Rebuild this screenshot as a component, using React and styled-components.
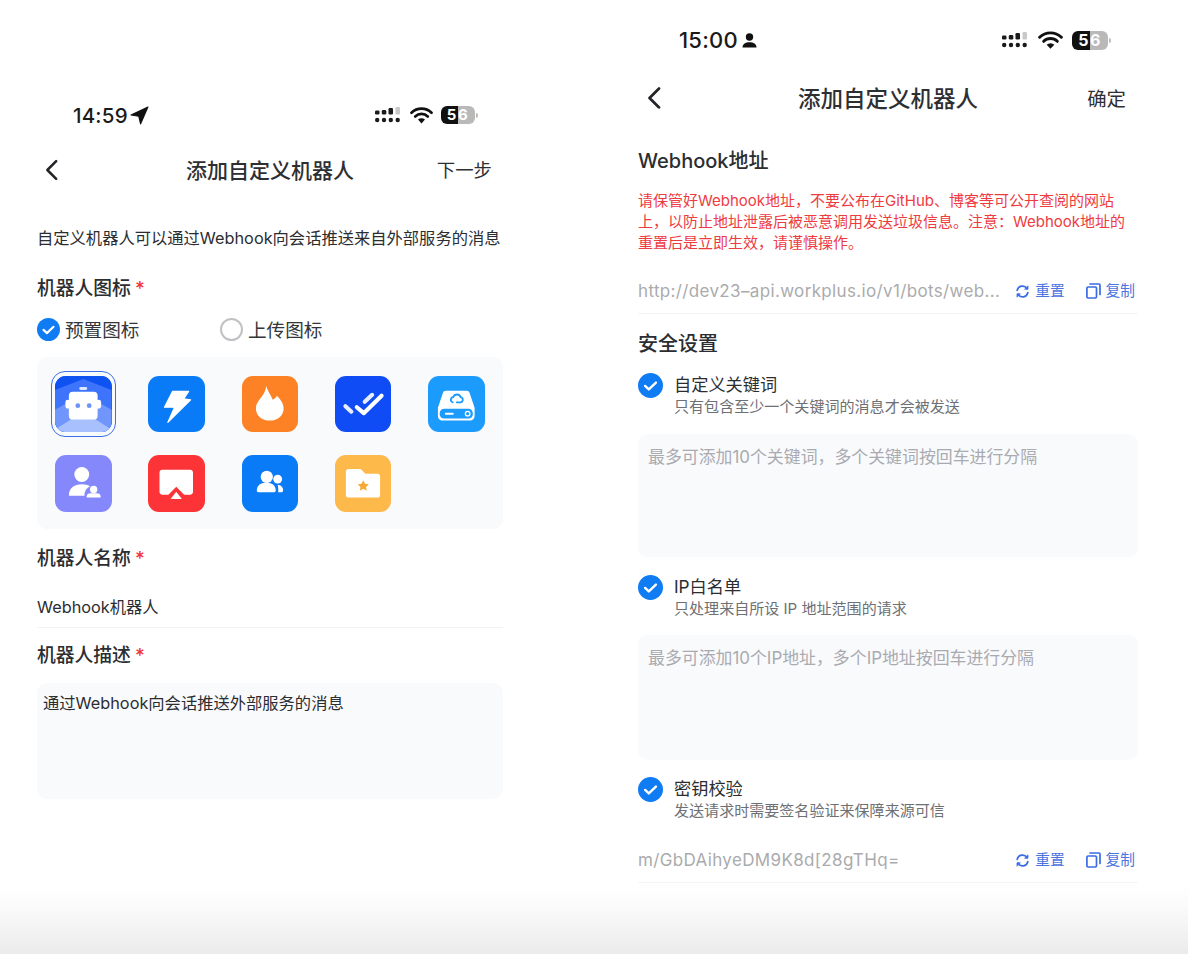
import React from "react";
import styled, { createGlobalStyle } from "styled-components";

const Global = createGlobalStyle`
  html, body { margin: 0; padding: 0; background: #fff; }
  * { box-sizing: border-box; }
  body { font-family: Inter, "Noto Sans CJK SC", sans-serif; color: #2b2d31; }
`;
const Page = styled.div`
  width: 1188px; height: 954px; overflow: hidden; display: flex; align-items: flex-start;
  background: linear-gradient(180deg, #fff 0, #fff 885px, #fbfbfb 905px, #ebebeb 954px);
`;
const Phone = styled.div`
  flex: none; width: ${p => p.$width}px; margin-left: ${p => p.$left}px; padding-top: ${p => p.$top}px;
`;
const StatusBar = styled.div`
  height: 30px; display: flex; align-items: center; justify-content: space-between;
  padding: 0 ${p => p.$right}px 0 ${p => p.$pad}px;
`;
const Clock = styled.div`
  display: flex; align-items: center; gap: ${p => p.$gap}px; font-size: ${p => p.$size}px; font-weight: 500; color: #1a1a1a; letter-spacing: .2px;
`;
const StatusIcons = styled.div`display: flex; align-items: center; gap: ${p => p.$gap}px;`;
const Battery = styled.div`
  position: relative; width: ${p => p.$w}px; height: ${p => p.$h}px; border-radius: 6px;
  background: linear-gradient(90deg, #111 0, #111 49%, #b9b9b9 49%, #b9b9b9 100%);
  color: #fff; font-size: ${p => p.$h - 3}px; font-weight: 700; line-height: ${p => p.$h}px; text-align: center; letter-spacing: 1.5px;
  &::after {
    content: ""; position: absolute; right: -3px; top: 50%; width: 2px; height: 5px; margin-top: -2.5px; border-radius: 0 2px 2px 0; background: #bdbdbd;
  }
`;
const Nav = styled.div`
  position: relative; margin-top: ${p => p.$mt}px; height: ${p => p.$h}px; display: flex; align-items: center; justify-content: center;
`;
const Back = styled.svg`position: absolute; left: ${p => p.$left}px; top: 50%; transform: translateY(-50%);`;
const NavTitle = styled.div`font-size: ${p => p.$size}px; font-weight: 500; color: #2e2f33; padding-bottom: 2px;`;
const NavAction = styled.div`position: absolute; right: ${p => p.$right}px; top: 50%; transform: translateY(-50%); padding-bottom: 2px; font-size: ${p => p.$size}px; color: #2e2f33;`;
const Desc = styled.div`margin-top: 36px; font-size: 16.3px; line-height: 24px; height: 24px; white-space: nowrap; color: #2b2d31;`;
const Label = styled.div`margin-top: ${p => p.$mt}px; height: 26px; line-height: 26px; font-size: 18.8px; font-weight: 500; color: #2b2d31; em { font-style: normal; color: #f0353b; margin-left: 4px; }`;
const RadioRow = styled.div`margin-top: 14px; height: 26px; display: flex; align-items: center;`;
const RadioOption = styled.div`display: flex; align-items: center; gap: 5px; width: ${p => p.$w}px; font-size: 18.6px; color: #34363a;`;
const RadioText = styled.span`margin-top: -2px;`;
const EmptyRadio = styled.span`width: 23px; height: 23px; border-radius: 50%; border: 2px solid #bfc1c4; background: #fff; flex: none;`;
const Panel = styled.div`
  margin-top: 15px; height: 172px; background: #f8fafc; border-radius: 10px; padding: 18.7px 18.3px;
  display: grid; grid-template-columns: repeat(5, 56.5px); grid-auto-rows: 56.5px; column-gap: 36.7px; row-gap: 23.1px;
`;
const Tile = styled.div`
  position: relative; width: 56.5px; height: 56.5px; border-radius: 11px; background: ${p => p.$bg}; overflow: ${p => p.$clip ? "hidden" : "visible"};
  svg { display: block; width: 100%; height: 100%; }
`;
const Ring = styled.div`
  position: relative; width: 56.5px; height: 56.5px;
  &::after { content: ""; position: absolute; inset: -4.7px; border: 1.5px solid #3e6fe6; border-radius: 14px; }
`;
const NameField = styled.div`margin-top: 12px; height: 44px; padding-top: 11px; line-height: 24px; font-size: 16.3px; color: #2b2d31; border-bottom: 1px solid #f1f2f4;`;
const TextBox = styled.div`
  margin-top: ${p => p.$mt}px; height: ${p => p.$h}px; background: #f9fafc; border-radius: 10px;
  padding: ${p => p.$py}px ${p => p.$px}px; font-size: ${p => p.$size}px; line-height: ${p => p.$lh}px; color: ${p => p.$color};
`;
const SectionTitle = styled.div`margin-top: ${p => p.$mt}px; height: 28px; line-height: 28px; font-size: 20px; font-weight: 500; color: #2b2d31;`;
const Warning = styled.div`margin-top: 15px; font-size: 15px; line-height: 21px; color: #ee3b3f; white-space: nowrap;`;
const UrlRow = styled.div`
  margin-top: ${p => p.$mt}px; height: 45px; padding: 0 3px 0 0; border-bottom: 1px solid #f3f4f5; display: flex; align-items: center; justify-content: space-between;
`;
const UrlText = styled.div`font-size: 17px; color: #aaabad; white-space: nowrap; letter-spacing: .35px;`;
const Actions = styled.div`display: flex; align-items: center; gap: 21px;`;
const ActionLink = styled.div`display: flex; align-items: center; gap: 5px; font-size: 14.7px; color: #4a74e0; line-height: 20px;`;
const CheckItem = styled.div`margin-top: ${p => p.$mt}px; display: flex; gap: 11px; align-items: flex-start;`;
const CheckTexts = styled.div`display: flex; flex-direction: column;`;
const CheckTitle = styled.div`font-size: 17.2px; line-height: 24px; color: #2b2d31;`;
const CheckSub = styled.div`font-size: 15.05px; line-height: 20px; color: #6e7074; white-space: nowrap;`;
const CheckDisc = styled.svg`flex: none; display: block;`;

const Checked = ({ size }) => (
  <CheckDisc width={size} height={size} viewBox="0 0 24 24">
    <circle cx="12" cy="12" r="12" fill="#0f7cf4" />
    <path d="M6.8 12.4l3.6 3.4 6.8-6.6" fill="none" stroke="#fff" strokeWidth="2.3" strokeLinecap="round" strokeLinejoin="round" />
  </CheckDisc>
);
const Chevron = ({ left, size }) => (
  <Back $left={left} width={size} height={size * 1.6} viewBox="0 0 12 20">
    <path d="M10.5 1.5L2 10l8.5 8.5" fill="none" stroke="#232427" strokeWidth="2.4" strokeLinecap="round" strokeLinejoin="round" />
  </Back>
);
const Signal = () => (
  <svg width="27" height="16" viewBox="0 0 27 16">
    <rect x="0" y="3.5" width="4.5" height="4" rx="1.3" fill="#1a1a1a" />
    <rect x="6.8" y="3" width="4.5" height="4.5" rx="1.3" fill="#1a1a1a" />
    <rect x="13.5" y="1" width="4.5" height="6.5" rx="1.3" fill="#1a1a1a" />
    <rect x="20.5" y="0" width="4.5" height="7.5" rx="1.3" fill="#c9c9c9" />
    {[2.2, 9, 15.8, 22.7].map(x => <circle key={x} cx={x} cy="13" r="2.2" fill="#1a1a1a" />)}
  </svg>
);
const Wifi = ({ w = 23 }) => (
  <svg width={w} height={w * 17 / 23} viewBox="0 0 23 17">
    <path d="M1.5 5.8a14.3 14.3 0 0 1 20 0" fill="none" stroke="#111" strokeWidth="2.7" strokeLinecap="round" />
    <path d="M5.2 9.5a9 9 0 0 1 12.6 0" fill="none" stroke="#111" strokeWidth="2.7" strokeLinecap="round" />
    <path d="M8 12.6a5 5 0 0 1 7 0l-3.5 3.8z" fill="#111" />
  </svg>
);
const RefreshIcon = () => (
  <svg width="15" height="15" viewBox="0 0 15 15" fill="none" stroke="#3a6ce6" strokeWidth="1.7" strokeLinecap="round">
    <path d="M2.2 6.3A5.4 5.4 0 0 1 12 4.6" />
    <path d="M12.8 8.7A5.4 5.4 0 0 1 3 10.4" />
    <path d="M13 2.2v3h-3z" fill="#3a6ce6" strokeWidth=".8" strokeLinejoin="round" />
    <path d="M2 12.8v-3h3z" fill="#3a6ce6" strokeWidth=".8" strokeLinejoin="round" />
  </svg>
);
const CopyIcon = () => (
  <svg width="15" height="16" viewBox="0 0 15 16" fill="none" stroke="#3a6ce6" strokeWidth="1.7" strokeLinejoin="round">
    <rect x=".9" y="4" width="9.6" height="11" rx="1.2" />
    <path d="M4 1h9a1 1 0 0 1 1 1v9.5" strokeLinecap="round" />
  </svg>
);
const UrlLine = ({ text, mt }) => (
  <UrlRow $mt={mt}>
    <UrlText>{text}</UrlText>
    <Actions>
      <ActionLink><RefreshIcon />重置</ActionLink>
      <ActionLink><CopyIcon />复制</ActionLink>
    </Actions>
  </UrlRow>
);

const RobotIcon = () => (
  <svg viewBox="0 0 57 57">
    <rect width="57" height="57" fill="#0f52f2" />
    <path d="M0 14L28.500 3 57 14v43H0z" fill="#3d74fb" />
    <path d="M0 34l28.500-16L57 34v23H0z" fill="#7196fb" />
    <path d="M0 54l28.500-18L57 54v3H0z" fill="#a8c0fe" />
    <rect x="24.500" y="11" width="8" height="3" rx="1.500" fill="#dfe8ff" />
    <rect x="14" y="16" width="29" height="28" rx="4" fill="#fff" />
    <rect x="10.500" y="24" width="5" height="9" rx="2.500" fill="#fff" />
    <rect x="41.500" y="24" width="5" height="9" rx="2.500" fill="#fff" />
    <circle cx="23" cy="30" r="2.400" fill="#6e93f8" />
    <circle cx="34.500" cy="30" r="2.400" fill="#6e93f8" />
  </svg>
);
const BoltIcon = () => (
  <svg viewBox="0 0 57 57">
    <path d="M24.700 15.600H41L36 23l7 1-23 22.800 6.800-15.300H16.600z" fill="#fff" stroke="#fff" strokeWidth="1.200" strokeLinejoin="round" />
  </svg>
);
const FlameIcon = () => (
  <svg viewBox="0 0 57 57">
    <path d="M24.300 10C26 15 29 19 31 24c1.800-1 3.300-2.400 4.300-4C39 24 42 28 42 32.500 42 40 36 45 28 45S14 40 14 32.500C14 24 24 20 24.300 10z" fill="#fff" />
  </svg>
);
const ChecksIcon = () => (
  <svg viewBox="0 0 57 57" fill="none" stroke="#fff" strokeWidth="4.200" strokeLinecap="round" strokeLinejoin="round">
    <path d="M10.500 30.500l6 5.500" opacity=".9" />
    <path d="M22 31.500l7 6 18-17.500" />
    <path d="M30 26l7.500-7" opacity=".9" />
  </svg>
);
const DriveIcon = () => (
  <svg viewBox="0 0 57 57">
    <path d="M18 15h21c1.500 0 2.500.8 3 2.200L47 32v8c0 2.700-2 5-4.700 5H14.700C12 45 10 42.700 10 40v-8l5-14.800c.5-1.400 1.500-2.200 3-2.200z" fill="#fff" />
    <rect x="11.800" y="33" width="33.400" height="10" rx="4.500" fill="#1b9bfc" />
    <rect x="17" y="37" width="9" height="2" rx="1" fill="#fff" />
    <circle cx="40" cy="38" r="2.300" fill="none" stroke="#fff" strokeWidth="1.300" />
    <path d="M25 26.500a2.600 2.600 0 0 1 .4-5.100 4 4 0 0 1 7.600 0 2.600 2.600 0 0 1 0 5.100h-4" fill="none" stroke="#1b9bfc" strokeWidth="1.800" strokeLinecap="round" />
  </svg>
);
const UserKeyIcon = () => (
  <svg viewBox="0 0 57 57">
    <circle cx="27" cy="19.700" r="7.500" fill="#fff" />
    <path d="M14 41c0-7.500 5-11.500 13-11.500 3.500 0 6.500.8 8.500 2-3 1.200-5 4-5.500 6.500l-.3 3z" fill="#fff" />
    <circle cx="39" cy="34.700" r="3.700" fill="#fff" />
    <path d="M32 43v-1.500c0-2 1.500-3 4-3h6c2.500 0 4 1 4 3V43z" fill="#fff" />
  </svg>
);
const ScreenIcon = () => (
  <svg viewBox="0 0 57 57">
    <path d="M14.500 15h28c1.700 0 2.900 1.200 2.900 2.900v19.200c0 1.700-1.200 2.900-2.900 2.900h-6L28.500 32 20.500 40h-6c-1.700 0-2.900-1.200-2.900-2.900V17.900c0-1.700 1.200-2.900 2.900-2.900z" fill="#fff" />
    <path d="M28.500 37l5.700 7.500H22.800z" fill="#fff" />
  </svg>
);
const GroupIcon = () => (
  <svg viewBox="0 0 57 57">
    <circle cx="25" cy="22" r="6.200" fill="#fff" />
    <path d="M15 35.500c0-5 4-7.500 9.500-7.500s9.500 2.500 9.500 7.500c0 1.300-.8 2.200-2 2.200H17c-1.200 0-2-.9-2-2.200z" fill="#fff" />
    <circle cx="36" cy="24.300" r="4.500" fill="#fff" />
    <path d="M36 30c3.500.3 5.500 2.300 5.500 5.500 0 1.300-.8 2.200-2 2.200H36.500c.3-2.500 0-5.500-.5-7.700z" fill="#fff" />
  </svg>
);
const FolderIcon = () => (
  <svg viewBox="0 0 57 57">
    <path d="M13.500 14h11c1 0 1.700.4 2.300 1l3.700 3.800h12.500c1.400 0 2.500 1.100 2.500 2.500v19.200c0 1.400-1.100 2.500-2.500 2.500H13.500c-1.400 0-2.500-1.100-2.500-2.500V16.500c0-1.400 1.100-2.500 2.500-2.500z" fill="#fff" />
    <path d="M28.500 25.500l1.700 3.500 3.900.5-2.800 2.700.7 3.800-3.500-1.900-3.500 1.900.7-3.800-2.800-2.700 3.900-.5z" fill="#f6a934" />
  </svg>
);

export default function App() {
  return (
    <Page>
      <Global />
      <Phone $width={466} $left={37} $top={100}>
        <StatusBar $pad={36} $right={28}>
          <Clock $size={20.500} $gap={2}>
            14:59
            <svg width="19" height="19" viewBox="0 0 18 18"><path d="M17 1L1 8.500l7.300 1.300L10 17z" fill="#111" stroke="#111" strokeWidth="1" strokeLinejoin="round" /></svg>
          </Clock>
          <StatusIcons $gap={8}>
            <Signal />
            <Wifi />
            <Battery $w={34} $h={18}>56</Battery>
          </StatusIcons>
        </StatusBar>
        <Nav $mt={20} $h={40}>
          <Chevron left={8} size={13} />
          <NavTitle $size={21}>添加自定义机器人</NavTitle>
          <NavAction $right={11} $size={18.400}>下一步</NavAction>
        </Nav>
        <Desc>自定义机器人可以通过Webhook向会话推送来自外部服务的消息</Desc>
        <Label $mt={26}>机器人图标<em>*</em></Label>
        <RadioRow>
          <RadioOption $w={183}><Checked size={23} /><RadioText>预置图标</RadioText></RadioOption>
          <RadioOption $w={140}><EmptyRadio /><RadioText>上传图标</RadioText></RadioOption>
        </RadioRow>
        <Panel>
          <Ring><Tile $bg="#0f52f2" $clip><RobotIcon /></Tile></Ring>
          <Tile $bg="#0a7bf7"><BoltIcon /></Tile>
          <Tile $bg="#fd8125"><FlameIcon /></Tile>
          <Tile $bg="#0f4cf5"><ChecksIcon /></Tile>
          <Tile $bg="#1b9bfc"><DriveIcon /></Tile>
          <Tile $bg="#8488fb"><UserKeyIcon /></Tile>
          <Tile $bg="#fc3437"><ScreenIcon /></Tile>
          <Tile $bg="#0a7bf7"><GroupIcon /></Tile>
          <Tile $bg="#fdb949"><FolderIcon /></Tile>
        </Panel>
        <Label $mt={17}>机器人名称<em>*</em></Label>
        <NameField>Webhook机器人</NameField>
        <Label $mt={15}>机器人描述<em>*</em></Label>
        <TextBox $mt={14} $h={116} $py={9} $px={6} $size={16.300} $lh={22} $color="#2b2d31">通过Webhook向会话推送外部服务的消息</TextBox>
      </Phone>

      <Phone $width={500} $left={135} $top={25}>
        <StatusBar $pad={41} $right={30}>
          <Clock $size={22} $gap={4}>
            15:00
            <svg width="15" height="15" viewBox="0 0 15 15"><circle cx="7.500" cy="4" r="3.700" fill="#111" /><path d="M0.500 14.500c0-3.500 3-5.300 7-5.300s7 1.800 7 5.300z" fill="#111" /></svg>
          </Clock>
          <StatusIcons $gap={9}>
            <Signal />
            <Wifi w={25} />
            <Battery $w={36} $h={19}>56</Battery>
          </StatusIcons>
        </StatusBar>
        <Nav $mt={21} $h={44}>
          <Chevron left={9} size={14} />
          <NavTitle $size={22.500}>添加自定义机器人</NavTitle>
          <NavAction $right={12} $size={19.400}>确定</NavAction>
        </Nav>
        <SectionTitle $mt={27}>Webhook地址</SectionTitle>
        <Warning>
          请保管好Webhook地址，不要公布在GitHub、博客等可公开查阅的网站<br />
          上，以防止地址泄露后被恶意调用发送垃圾信息。注意：Webhook地址的<br />
          重置后是立即生效，请谨慎操作。
        </Warning>
        <UrlLine mt={16} text="http://dev23–api.workplus.io/v1/bots/web..." />
        <SectionTitle $mt={16}>安全设置</SectionTitle>
        <CheckItem $mt={15}>
          <Checked size={25} />
          <CheckTexts><CheckTitle>自定义关键词</CheckTitle><CheckSub>只有包含至少一个关键词的消息才会被发送</CheckSub></CheckTexts>
        </CheckItem>
        <TextBox $mt={17} $h={123} $py={11} $px={10} $size={16.900} $lh={24} $color="#a9abb0">最多可添加10个关键词，多个关键词按回车进行分隔</TextBox>
        <CheckItem $mt={18}>
          <Checked size={25} />
          <CheckTexts><CheckTitle>IP白名单</CheckTitle><CheckSub>只处理来自所设 IP 地址范围的请求</CheckSub></CheckTexts>
        </CheckItem>
        <TextBox $mt={16} $h={125} $py={11} $px={10} $size={16.900} $lh={24} $color="#a9abb0">最多可添加10个IP地址，多个IP地址按回车进行分隔</TextBox>
        <CheckItem $mt={17}>
          <Checked size={25} />
          <CheckTexts><CheckTitle>密钥校验</CheckTitle><CheckSub>发送请求时需要签名验证来保障来源可信</CheckSub></CheckTexts>
        </CheckItem>
        <UrlLine mt={17} text="m/GbDAihyeDM9K8d[28gTHq=" />
      </Phone>
    </Page>
  );
}
